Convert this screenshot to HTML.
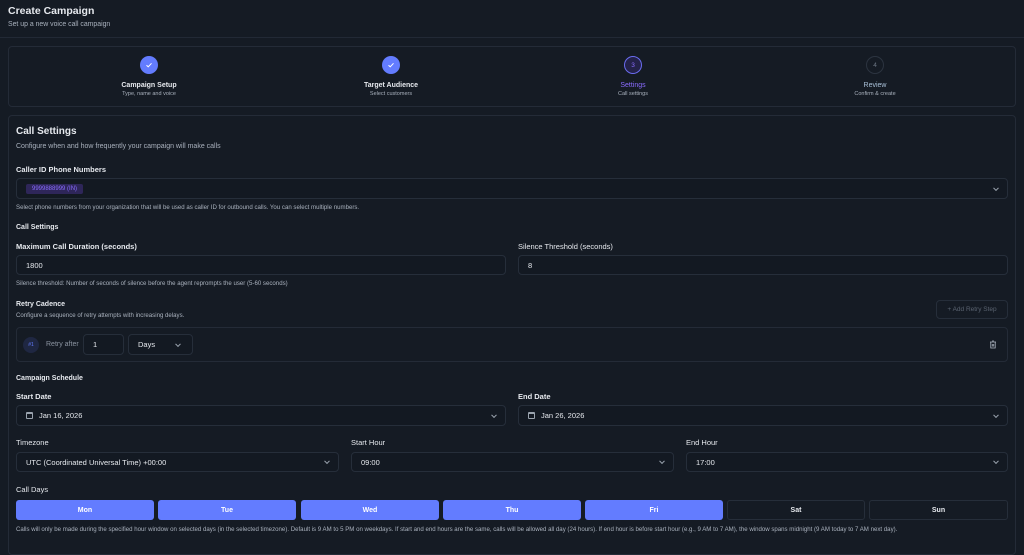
<!DOCTYPE html>
<html><head><style>
*{box-sizing:border-box;margin:0;padding:0}
body{width:1024px;height:542px;overflow:hidden;background:#151b24;font-family:"Liberation Sans",sans-serif;color:#e6e9ee;position:relative}
.a{position:absolute}
.card{position:absolute;border:1px solid #242b37;border-radius:4px;background:#151b24}
.box{position:absolute;border:1px solid #262e3a;border-radius:4px;background:#131922;font-size:7.5px;color:#e6e9ee;padding-left:9px;display:flex;align-items:center}
.lbl{position:absolute;font-size:7.5px;font-weight:bold;color:#e6e9ee}
.help{position:absolute;font-size:6.1px;color:#a9b1bd}
.chev{position:absolute;right:9px;top:50%;width:4px;height:4px;border-right:1px solid #9aa3ae;border-bottom:1px solid #9aa3ae;transform:translateY(-70%) rotate(45deg)}
.step{position:absolute;text-align:center;width:160px}
.circ{width:18px;height:18px;border-radius:50%;margin:0 auto;display:flex;align-items:center;justify-content:center;font-size:6.5px}
.st{font-size:7px;font-weight:bold;margin-top:8px}
.ss{font-size:5.5px;color:#a9b1bd;margin-top:2px}
.day{position:absolute;top:500px;height:20px;border-radius:3px;font-size:7px;display:flex;align-items:center;justify-content:center;font-weight:bold}
.on{background:#637cff;color:#fff}
.off{border:1px solid #262e3a;color:#e6e9ee}
.cal{display:inline-block;width:7px;height:7px;border:1px solid #9aa3ae;border-radius:1px;margin-right:6px;border-top-width:2px}
</style></head><body>
<div class="a" style="left:8px;top:5px;font-size:10.5px;font-weight:bold">Create Campaign</div>
<div class="a" style="left:8px;top:21px;font-size:6.9px;color:#a9b1bd">Set up a new voice call campaign</div>
<div class="a" style="left:0;top:37px;width:1024px;height:1px;background:#222935"></div>

<div class="card" style="left:8px;top:46px;width:1008px;height:61px"></div>
<div class="step" style="left:69px;top:56px"><div class="circ" style="background:#637cff"><svg width="8" height="8" viewBox="0 0 8 8"><path d="M1.5 4.2 3.2 5.8 6.5 2.3" stroke="#fff" stroke-width="1" fill="none"/></svg></div><div class="st">Campaign Setup</div><div class="ss">Type, name and voice</div></div>
<div class="step" style="left:311px;top:56px"><div class="circ" style="background:#637cff"><svg width="8" height="8" viewBox="0 0 8 8"><path d="M1.5 4.2 3.2 5.8 6.5 2.3" stroke="#fff" stroke-width="1" fill="none"/></svg></div><div class="st">Target Audience</div><div class="ss">Select customers</div></div>
<div class="step" style="left:553px;top:56px"><div class="circ" style="border:1px solid #6a6cf0;background:#24224a;color:#8a6cff">3</div><div class="st" style="color:#8a6cff;font-weight:normal">Settings</div><div class="ss">Call settings</div></div>
<div class="step" style="left:795px;top:56px"><div class="circ" style="border:1px solid #2c3440;color:#6e7785">4</div><div class="st" style="color:#a9c0d8;font-weight:normal">Review</div><div class="ss">Confirm &amp; create</div></div>

<div class="card" style="left:8px;top:115px;width:1008px;height:440px"></div>
<div class="a" style="left:16px;top:126px;font-size:10px;font-weight:bold">Call Settings</div>
<div class="a" style="left:16px;top:143px;font-size:7px;color:#a9b1bd">Configure when and how frequently your campaign will make calls</div>
<div class="lbl" style="left:16px;top:165px">Caller ID Phone Numbers</div>
<div class="box" style="left:16px;top:178px;width:992px;height:21px"><span style="background:#2e2659;color:#8a6cff;font-size:6px;padding:2px 6px;border-radius:2px">9999888999 (IN)</span><i class="chev"></i></div>
<div class="help" style="left:16px;top:204px">Select phone numbers from your organization that will be used as caller ID for outbound calls. You can select multiple numbers.</div>
<div class="lbl" style="left:16px;top:224px;font-size:7px">Call Settings</div>
<div class="lbl" style="left:16px;top:242px">Maximum Call Duration (seconds)</div>
<div class="lbl" style="left:518px;top:242px;font-weight:normal">Silence Threshold (seconds)</div>
<div class="box" style="left:16px;top:255px;width:490px;height:20px">1800</div>
<div class="box" style="left:518px;top:255px;width:490px;height:20px">8</div>
<div class="help" style="left:16px;top:280px">Silence threshold: Number of seconds of silence before the agent reprompts the user (5-60 seconds)</div>
<div class="lbl" style="left:16px;top:301px;font-size:7px">Retry Cadence</div>
<div class="help" style="left:16px;top:312px">Configure a sequence of retry attempts with increasing delays.</div>
<div class="a" style="left:936px;top:300px;width:72px;height:19px;border:1px solid #262e3a;border-radius:4px;font-size:6.5px;color:#5a6370;display:flex;align-items:center;justify-content:center">+ Add Retry Step</div>
<div class="a" style="left:16px;top:327px;width:992px;height:35px;border:1px solid #242b37;border-radius:4px"></div>
<div class="a" style="left:23px;top:337px;width:16px;height:16px;border-radius:50%;background:#1f2742;color:#637cff;font-size:5px;display:flex;align-items:center;justify-content:center">#1</div>
<div class="a" style="left:46px;top:341px;font-size:7px;color:#8b94a1;line-height:8px">Retry after</div>
<div class="box" style="left:83px;top:334px;width:41px;height:21px">1</div>
<div class="box" style="left:128px;top:334px;width:65px;height:21px">Days<i class="chev" style="right:12px"></i></div>
<svg class="a" style="left:989px;top:340px" width="8" height="9" viewBox="0 0 8 9"><path d="M1 2h6M3 1h2M1.8 2v6h4.4V2M3.3 4v2.5M4.7 4v2.5" stroke="#b0b8c3" stroke-width=".8" fill="none"/></svg>
<div class="lbl" style="left:16px;top:375px;font-size:7px">Campaign Schedule</div>
<div class="lbl" style="left:16px;top:392px">Start Date</div>
<div class="lbl" style="left:518px;top:392px">End Date</div>
<div class="box" style="left:16px;top:405px;width:490px;height:21px"><span class="cal"></span>Jan 16, 2026<i class="chev"></i></div>
<div class="box" style="left:518px;top:405px;width:490px;height:21px"><span class="cal"></span>Jan 26, 2026<i class="chev"></i></div>
<div class="lbl" style="left:16px;top:438px;font-weight:normal">Timezone</div>
<div class="lbl" style="left:351px;top:438px;font-weight:normal">Start Hour</div>
<div class="lbl" style="left:686px;top:438px;font-weight:normal">End Hour</div>
<div class="box" style="left:16px;top:452px;width:323px;height:20px">UTC (Coordinated Universal Time) +00:00<i class="chev"></i></div>
<div class="box" style="left:351px;top:452px;width:323px;height:20px">09:00<i class="chev"></i></div>
<div class="box" style="left:686px;top:452px;width:322px;height:20px">17:00<i class="chev"></i></div>
<div class="lbl" style="left:16px;top:485px;font-weight:normal">Call Days</div>
<div class="day on" style="left:16px;width:138px">Mon</div>
<div class="day on" style="left:158px;width:138px">Tue</div>
<div class="day on" style="left:301px;width:138px">Wed</div>
<div class="day on" style="left:443px;width:138px">Thu</div>
<div class="day on" style="left:585px;width:138px">Fri</div>
<div class="day off" style="left:727px;width:138px">Sat</div>
<div class="day off" style="left:869px;width:139px">Sun</div>
<div class="help" style="left:16px;top:526px;white-space:nowrap">Calls will only be made during the specified hour window on selected days (in the selected timezone). Default is 9 AM to 5 PM on weekdays. If start and end hours are the same, calls will be allowed all day (24 hours). If end hour is before start hour (e.g., 9 AM to 7 AM), the window spans midnight (9 AM today to 7 AM next day).</div>
</body></html>
